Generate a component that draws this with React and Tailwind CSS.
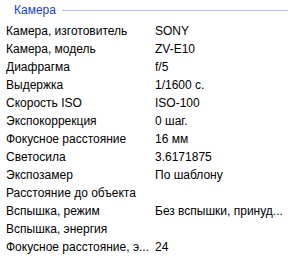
const rows = [
  ["Камера, изготовитель", "SONY"],
  ["Камера, модель", "ZV-E10"],
  ["Диафрагма", "f/5"],
  ["Выдержка", "1/1600 с."],
  ["Скорость ISO", "ISO-100"],
  ["Экспокоррекция", "0 шаг."],
  ["Фокусное расстояние", "16 мм"],
  ["Светосила", "3.6171875"],
  ["Экспозамер", "По шаблону"],
  ["Расстояние до объекта", ""],
  ["Вспышка, режим", "Без вспышки, принуд..."],
  ["Вспышка, энергия", ""],
  ["Фокусное расстояние, э...", "24"],
];

export default function App() {
  return (
    <div className="w-[299px] h-[261px] bg-white overflow-hidden text-[12px] text-black font-['Liberation_Sans',sans-serif]">
      {/* group header */}
      <div className="flex items-center h-[19px] pl-[14px] pr-[11px] pt-[1px]">
        <span className="text-[#1c3fc4] leading-none">Камера</span>
        <div className="flex-1 ml-[6px] h-px bg-[#b3bfdc]" />
      </div>

      <div className="pt-[3px]">
        {rows.map(([label, value]) => (
          <div key={label} className="flex items-center h-[18px] pl-[6px]">
            <div className="w-[149px] whitespace-nowrap overflow-hidden">{label}</div>
            <div className="flex-1 whitespace-nowrap overflow-hidden">{value}</div>
          </div>
        ))}
      </div>
    </div>
  );
}
